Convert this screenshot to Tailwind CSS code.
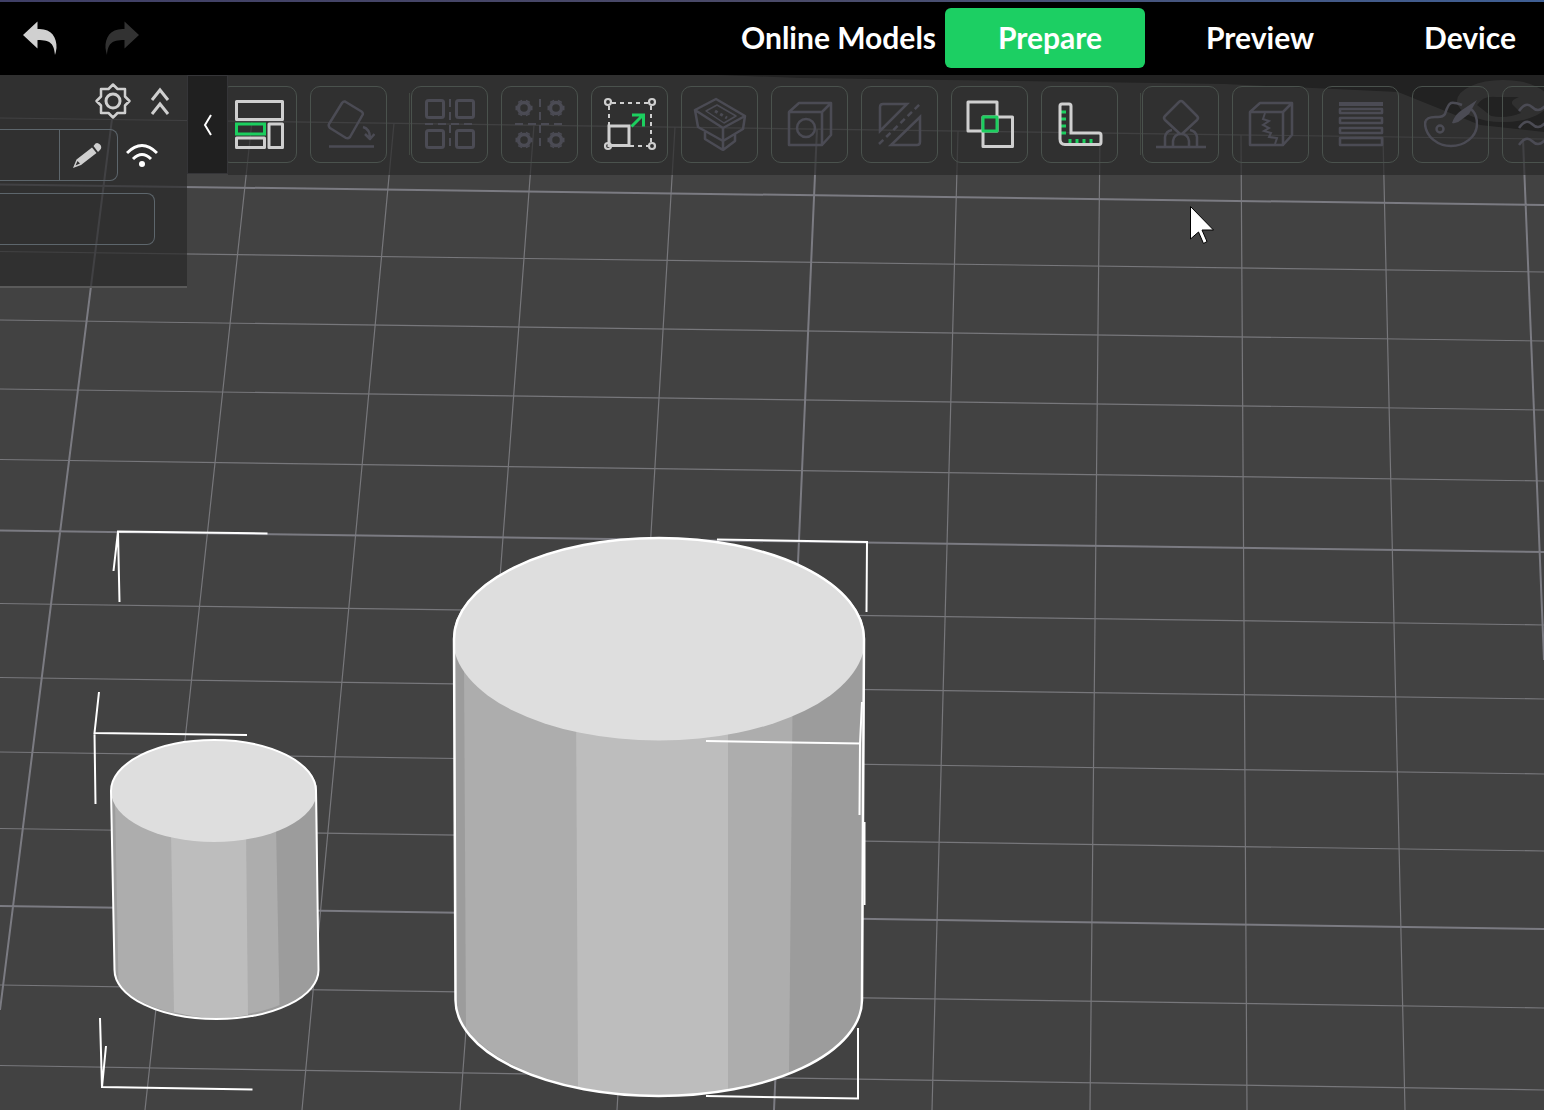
<!DOCTYPE html>
<html lang="en">
<head>
    <meta charset="UTF-8">
    <meta name="viewport" content="width=device-width, initial-scale=1.0">
    <title>Prepare</title>
    <script src="https://cdn.jsdelivr.net/npm/@tailwindcss/browser@4"></script>
</head>
<body class="flex flex-col h-screen overflow-hidden bg-[#111111] font-[Lato,sans-serif]">
    <!-- Desktop edge above the window -->
    <div class="h-[2px] shrink-0 bg-linear-to-r from-[#3f3f66] via-[#4a4a68] to-[#3f5f94]"></div>

    <!-- Title bar -->
    <header class="flex items-center h-[73px] pb-0.5 shrink-0 bg-black overflow-hidden">
        <button class="ml-[22px]" aria-label="Undo">
            <svg width="36" height="36" viewBox="0 0 36 36" class="text-[#d0d0d0]"><path fill="currentColor" d="M1 15 15.500 1.500V9C29 8 35 17 34.500 28Q34 32 33 35C32 24 29 20 15.500 20V28.500Z"/></svg>
        </button>
        <button class="ml-[46px]" aria-label="Redo">
            <svg width="36" height="36" viewBox="0 0 36 36" class="text-[#323232]"><path fill="currentColor" d="M35 15 20.500 1.500V9C7 8 1 17 1.500 28Q2 32 3 35C4 24 7 20 20.500 20V28.500Z"/></svg>
        </button>
        <nav class="flex gap-2.5 ml-auto -mr-[21px] text-[30px] font-bold text-white">
            <button class="w-[200px] h-[60px] pl-1.5 rounded-md whitespace-nowrap">Online Models</button>
            <button class="w-[200px] h-[60px] pl-2.5 rounded-md bg-[#1ccf63]">Prepare</button>
            <button class="w-[200px] h-[60px] pl-2.5 rounded-md">Preview</button>
            <button class="w-[200px] h-[60px] pl-2.5 rounded-md">Device</button>
        </nav>
    </header>

    <main class="relative flex-1 min-h-0 overflow-hidden">
        <!-- 3D scene -->
        <svg class="absolute inset-0 w-full h-full" viewBox="0 75 1544 1035" preserveAspectRatio="xMinYMin slice" role="img" aria-label="Build plate with two cylinders">
            <path fill="#424242" d="M0 70H580L800 78 1224 84 1398 92 1480 125 1544 132V1110H0Z"/>
            <path fill="#424242" fill-rule="evenodd" d="M1457 101a46 21 0 1 0 92 0a46 21 0 1 0-92 0M1477 105q6-10 20-8h22q-10 4-6 8l8 8q-14 6-30 3z"/>
            <!-- Plate grid, thin lines -->
            <g stroke="#77777b" stroke-width="1.200" fill="none">
                <path d="M0 118 1544 139M0 251.500 1544 272M0 320 1544 341M0 389 1544 410M0 459.500 1544 481M0 603.500 1544 625M0 677.500 1544 699M0 752 1544 774M0 828.500 1544 851M0 985 1544 1008M0 1065.500 1544 1090"/>
                <path d="M252 121 145 1110M394 123 302 1110M534 125 460 1110M675 127 617 1110M958 131 932 1110M1100 133 1090 1110M1241 135 1247 1110M1383 137 1405 1110"/>
            </g>
            <!-- Plate grid, thick lines -->
            <path stroke="#7b7b82" stroke-width="2" fill="none" d="M0 184.500 1544 205M0 530.500 1544 552M0 906 1544 929M112 119 0 1010M817 129 774 1110M1523 139 1544 660"/>
            <!-- Small cylinder -->
            <path fill="#9c9c9c" d="M111 790 114.500 970A102 49 0 0 0 318.500 970L317 790Z"/>
            <path fill="#adadad" d="M115 800 118.500 985Q136 1004 174 1013L216 1018 248 1014Q268 1010 279.500 1005L275.500 800Z"/>
            <path fill="#bdbdbd" d="M171 830 174 1012Q211 1022 248 1015L246 830Z"/>
            <ellipse cx="214" cy="791" rx="103" ry="51" fill="#dedede"/>
            <path fill="none" stroke="#fff" stroke-width="2" d="M111 791A103 51 0 0 1 214 740 102 51 0 0 1 316 791L318.500 970A102 49 0 0 1 114.500 970Z"/>
            <!-- Large cylinder -->
            <path fill="#9c9c9c" d="M453.500 638 455.500 1000A203 96 0 0 0 862 1000L865 638Z"/>
            <path fill="#adadad" d="M464 660 466 1029Q500 1070 578 1087L728 1090Q762 1084 789 1073L793 660Z"/>
            <path fill="#bdbdbd" d="M576 700 578 1087Q655 1103 728 1090V700Z"/>
            <ellipse cx="659" cy="639" rx="206" ry="101.500" fill="#dedede"/>
            <path fill="none" stroke="#fff" stroke-width="2.500" d="M454 639A205 101 0 0 1 659 538 205 101 0 0 1 864 639L862 1000A203 96 0 0 1 455.500 1000Z"/>
            <!-- Selection box corners -->
            <path fill="none" stroke="#fff" stroke-width="2" d="M267.500 533.500 118 531.500 113.500 571M118 532 119.500 602M99 692 94.500 733 247 735M94.500 733 95.500 804M100 1018 102 1087 252.500 1089.500M102 1087 106 1046M717 539.500 867 542 866.500 612M706 741 860 743.500 862 702M860 743.500 859.500 815M864.500 822V905M858 1028V1098.500L706 1096"/>
            <!-- Mouse pointer -->
            <path fill="#fff" stroke="#000" d="M1190.500 206.500V239L1198.500 232 1203.500 243.500 1207 241.500 1202 230H1213.500Z"/>
        </svg>

        <div class="relative flex items-start">
            <!-- Printer panel -->
            <aside class="w-[187px] h-[213px] shrink-0 bg-[#292929]/70 border-b-2 border-[#5a5a5a]">
                <div class="flex items-center justify-end gap-[18px] h-[54px] pr-[17px] pb-0.5">
                    <button aria-label="Printer settings">
                        <svg width="38" height="38" viewBox="0 0 38 38" fill="none" stroke="#cfcfcf" stroke-width="2.500"><path stroke-linejoin="round" d="M19 2.500 23.500 7H31V14.500L35.500 19 31 23.500V31H23.500L19 35.500 14.500 31H7V23.500L2.500 19 7 14.500V7H14.500Z"/><circle cx="19" cy="19" r="7" stroke-width="3"/></svg>
                    </button>
                    <button aria-label="Collapse">
                        <svg width="20" height="30" viewBox="0 0 20 30" fill="none" stroke="#cfcfcf" stroke-width="3"><path d="M2 14 10 4 18 14M2 28 10 18 18 28"/></svg>
                    </button>
                </div>
                <div class="flex items-center">
                    <input aria-label="Printer name" class="w-[60px] h-[52px] px-2 bg-transparent border-y border-r border-[#5d666c] text-white outline-none">
                    <button class="flex items-center justify-center w-[58px] h-[52px] pr-1 border-y border-r border-[#5d666c] rounded-r-lg" aria-label="Edit printer">
                        <svg width="30" height="28" viewBox="0 0 30 28" fill="#cfcfcf"><path d="M1 27 4.500 18.500 20 6.500 24.500 12 9 24ZM21.500 5 23.500 2.500Q25.500 1 28 3.500T28 9L26 11Z"/><path fill="#303030" d="M3.500 24.500 5.500 20 8 22.500Z"/></svg>
                    </button>
                    <button class="ml-2" aria-label="Network">
                        <svg width="32" height="26" viewBox="0 0 32 26" fill="none" stroke="#fff" stroke-width="3"><path d="M1 11Q16-4 31 11M7 17Q16 8 25 17"/><circle cx="16" cy="22" r="3" fill="#fff" stroke="none"/></svg>
                    </button>
                </div>
                <select aria-label="Plate type" class="block appearance-none w-[155px] h-[52px] mt-3 bg-transparent border-y border-r border-[#5d666c] rounded-r-lg"></select>
            </aside>
            <button class="flex items-center justify-center w-[41px] h-[99px] shrink-0 bg-[#202020] border border-[#353538]" aria-label="Hide panel">
                <svg width="10" height="22" viewBox="0 0 10 22" fill="none" stroke="#fff" stroke-width="2"><path d="M8 1 2 11 8 21"/></svg>
            </button>

            <!-- Tools -->
            <div class="flex items-center gap-[13px] flex-1 min-w-0 h-[100px] pb-0.5 bg-[#292929]/70 overflow-hidden text-[#4b4b54]">
                <button class="flex items-center justify-center size-[77px] shrink-0 -ml-2 border border-[#4a524d] rounded-[10px]" aria-label="Arrange">
                    <svg width="52" height="52" viewBox="0 0 52 52" fill="none" stroke="#cfcfcf" stroke-width="3"><path stroke-linejoin="round" d="M3.500 3.500H49.500V21.500H3.500ZM36 26H49.500V49.500H36ZM3.500 40H31.500V49.500H3.500Z"/><path stroke="#1ccf5f" d="M3.500 26H31.500V36H3.500Z"/></svg>
                </button>
                <button class="flex items-center justify-center size-[77px] shrink-0 border border-[#4a524d] rounded-[10px]" aria-label="Lay on face">
                    <svg width="52" height="52" viewBox="0 0 52 52" fill="none" stroke="currentColor" stroke-width="2.500" stroke-linejoin="round"><path d="M22 3.500 38.500 13.500Q40.500 15 39.500 17L27 39Q25 41 23 40L7 30Q5 28 6 26L19 5Q20.500 3 22 3.500ZM6 48.500H51M40 29Q47 31 47 40M42 36 47 41 51.500 36"/></svg>
                </button>
                <div class="w-px h-[62px] shrink-0 ml-[9px] -mr-3 bg-[#424842]"></div>
                <button class="flex items-center justify-center size-[77px] shrink-0 border border-[#4a524d] rounded-[10px]" aria-label="Split to objects">
                    <svg width="52" height="52" viewBox="0 0 52 52" fill="none" stroke="currentColor" stroke-width="3"><rect x="2.500" y="2.500" width="17" height="17" rx="2"/><rect x="32.500" y="2.500" width="17" height="17" rx="2"/><rect x="2.500" y="32.500" width="17" height="17" rx="2"/><rect x="32.500" y="32.500" width="17" height="17" rx="2"/><path stroke-width="2" stroke-dasharray="8 5" d="M26 1V51M1 26H51"/></svg>
                </button>
                <button class="flex items-center justify-center size-[77px] shrink-0 border border-[#4a524d] rounded-[10px]" aria-label="Split to parts">
                    <svg width="52" height="52" viewBox="0 0 52 52" fill="none" stroke="currentColor" stroke-width="3">
                        <defs><g id="cog"><circle r="5.500" stroke-width="3.500"/><path stroke-width="4.500" d="M-3.500-6-4.200-7.300M3.500-6 4.200-7.300M-6.500 0H-8.500M6.500 0H8.500M-3.500 6-4.200 7.300M3.500 6 4.200 7.300"/></g></defs>
                        <use href="#cog" x="10" y="10"/><use href="#cog" x="42" y="10"/><use href="#cog" x="10" y="42"/><use href="#cog" x="42" y="42"/>
                        <path stroke-width="2" stroke-dasharray="8 5" d="M26 1V51M1 26H51"/>
                    </svg>
                </button>
                <button class="flex items-center justify-center size-[77px] shrink-0 border border-[#4a524d] rounded-[10px]" aria-label="Scale">
                    <svg width="54" height="54" viewBox="0 0 54 54" fill="none" stroke="#cfcfcf" stroke-width="2"><path stroke-dasharray="4 4" d="M9 6H46M6 9V28M48 9V46M27 49H46"/><g stroke-width="2.200"><circle cx="5" cy="5" r="3"/><circle cx="49" cy="5" r="3"/><circle cx="5" cy="49" r="3"/><circle cx="49" cy="49" r="3"/></g><path stroke-width="3" d="M6 29H26V48.500H6Z"/><path stroke="#1ccf5f" stroke-width="3" d="M28.500 29.500 40 18M29 18H40.500V29.500"/></svg>
                </button>
                <button class="flex items-center justify-center size-[77px] shrink-0 border border-[#4a524d] rounded-[10px]" aria-label="Hollow">
                    <svg width="54" height="54" viewBox="0 0 54 54" fill="none" stroke="currentColor" stroke-width="2.500" stroke-linejoin="round"><path d="M23 2 52 19 30 31 2 13ZM2 13 5 30 30 44 50 32 52 19M30 31V53M12 35V42L30 53 42 44V37"/><path stroke-width="1.500" d="M24 8 43 19 31 26 13 14Z"/><path stroke-width="3" stroke-dasharray="3 3" d="M22 14 34 21"/></svg>
                </button>
                <button class="flex items-center justify-center size-[77px] shrink-0 border border-[#4a524d] rounded-[10px]" aria-label="Hole">
                    <svg width="46" height="46" viewBox="0 0 46 46" fill="none" stroke="currentColor" stroke-width="2.500"><path stroke-linejoin="round" d="M2 11H35V44H2ZM2 11 12 2H44L35 11M44 2V34L35 44"/><circle cx="19" cy="27" r="9"/></svg>
                </button>
                <button class="flex items-center justify-center size-[77px] shrink-0 border border-[#4a524d] rounded-[10px]" aria-label="Cut">
                    <svg width="46" height="46" viewBox="0 0 46 46" fill="none" stroke="currentColor" stroke-width="2.500"><path d="M3 30V6Q3 3 6 3H30ZM43 16V41Q43 44 40 44H14Z"/><path stroke-dasharray="6 4" d="M2 43 44 2"/></svg>
                </button>
                <button class="flex items-center justify-center size-[77px] shrink-0 border border-[#4a524d] rounded-[10px]" aria-label="Mesh boolean">
                    <svg width="50" height="50" viewBox="0 0 50 50" fill="none" stroke="#cfcfcf" stroke-width="3" stroke-linejoin="round"><path d="M3 3H32V32H3ZM18 18H47.500V47.500H18Z"/><path stroke="#1ccf5f" fill="#333333" d="M18 18H32V32H18Z"/></svg>
                </button>
                <button class="flex items-center justify-center size-[77px] shrink-0 border border-[#4a524d] rounded-[10px]" aria-label="Measure">
                    <svg width="46" height="46" viewBox="0 0 46 46" fill="none" stroke="#cfcfcf" stroke-width="3"><path stroke="#1ccf5f" d="M4 11H9M4 18H9M4 25H9M4 32H9M13 43V38M20 43V38M27 43V38M34 43V38"/><path d="M5 3H12Q14 3 14 5V32H42Q44 32 44 34V41Q44 43.500 42 43.500H8Q3 43.500 3 38V5Q3 3 5 3Z"/></svg>
                </button>
                <div class="w-px h-[62px] shrink-0 ml-[9px] -mr-3 bg-[#424842]"></div>
                <button class="flex items-center justify-center size-[77px] shrink-0 border border-[#4a524d] rounded-[10px]" aria-label="Support painting">
                    <svg width="50" height="50" viewBox="0 0 50 50" fill="none" stroke="currentColor" stroke-width="2.500" stroke-linejoin="round"><path d="M27 3 41 17Q43 19 41 21L27 34Q25 36 23 34L9 21Q7 19 9 17L23 3Q25 1 27 3ZM0 48H50M9 48V38Q10 32 16 31M41 48V38Q40 32 34 31M17 48V42Q18 35 25 35T33 42V48"/></svg>
                </button>
                <button class="flex items-center justify-center size-[77px] shrink-0 border border-[#4a524d] rounded-[10px]" aria-label="Seam painting">
                    <svg width="46" height="46" viewBox="0 0 46 46" fill="none" stroke="currentColor" stroke-width="2.500"><path stroke-linejoin="round" d="M2 11H35V44H2ZM2 11 12 2H44V34L35 44M35 11 44 2"/><path stroke-width="2" d="M17 12 15 18 21 20 15 24 21 27 16 30 23 32 21 36 29 37 27 43"/></svg>
                </button>
                <button class="flex items-center justify-center size-[77px] shrink-0 border border-[#4a524d] rounded-[10px]" aria-label="Variable layer height">
                    <svg width="46" height="46" viewBox="0 0 46 46" fill="none" stroke="currentColor" stroke-width="2.500"><path stroke-width="4" d="M1 3H45"/><path stroke-linejoin="round" d="M2 8H44V12H2ZM2 17H44V22H2ZM2 27H44V32H2ZM2 37H44V44H2Z"/></svg>
                </button>
                <button class="flex items-center justify-center size-[77px] shrink-0 border border-[#4a524d] rounded-[10px]" aria-label="Color painting">
                    <svg width="54" height="50" viewBox="0 0 54 50" fill="none" stroke="currentColor" stroke-width="2.500"><path d="M38 6Q30 3 27 4 24 5 21 15 19 18 14 18 1 17 1 25C2 38 14 47 27 47S53 38 53 25Q53 15 47 10"/><circle cx="16" cy="30" r="3.500"/><path fill="currentColor" stroke="none" d="M53 1 45 15 37 21Q33 25 28 24 31 15 38 11Z"/></svg>
                </button>
                <button class="flex items-center justify-center size-[77px] shrink-0 border border-[#4a524d] rounded-[10px]" aria-label="Fuzzy skin">
                    <svg width="46" height="46" viewBox="0 0 46 46" fill="none" stroke="currentColor" stroke-width="2.500"><path d="M1 10Q8 0 14 6T26 6 38 6 45 6M1 27Q8 17 14 23T26 23 38 23 45 23M1 44Q8 34 14 40T26 40 38 40 45 40"/></svg>
                </button>
            </div>
        </div>
    </main>
</body>
</html>
